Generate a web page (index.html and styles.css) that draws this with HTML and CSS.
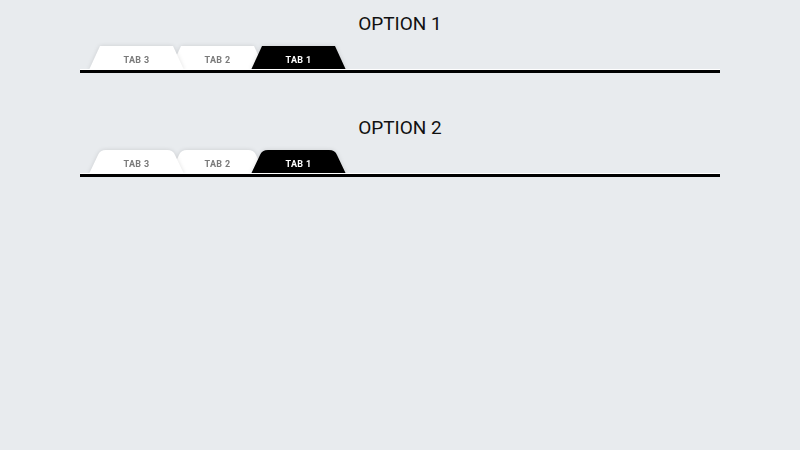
FILE: index.html
```html
<!DOCTYPE html>
<html lang="en">
<head>
    <meta charset="UTF-8">
    <meta name="viewport" content="width=device-width, initial-scale=1.0">
    <title>Tabs</title>
    <link rel="stylesheet" href="styles.css">
</head>
<body>
    <div class="container">
        <section class="option">
            <h2 class="option-title">OPTION 1</h2>
            <div class="tabs">
                <a class="tab tab-3">TAB 3</a>
                <a class="tab tab-2">TAB 2</a>
                <a class="tab tab-1 active">TAB 1</a>
            </div>
            <div class="tab-line"></div>
        </section>

        <section class="option rounded">
            <h2 class="option-title">OPTION 2</h2>
            <div class="tabs">
                <a class="tab tab-3">TAB 3</a>
                <a class="tab tab-2">TAB 2</a>
                <a class="tab tab-1 active">TAB 1</a>
            </div>
            <div class="tab-line"></div>
        </section>
    </div>
</body>
</html>
```

FILE: styles.css
```css
body {
    margin: 0;
    font-family: Roboto, 'Liberation Sans', sans-serif;
    background-color: #e8ebee;
}
.container {
    width: 640px;
    margin: 0 auto;
}
.option {
    padding-top: 12px;
    margin-bottom: 31px;
}
.option-title {
    margin: 0 0 10px;
    font-size: 19px;
    line-height: 24px;
    font-weight: 400;
    color: #111;
    text-align: center;
}
.tabs {
    display: flex;
    padding-left: 9px;
}
.tab {
    position: relative;
    box-sizing: border-box;
    width: 95px;
    height: 24px;
    padding-top: 3px;
    margin-left: -14px;
    display: flex;
    align-items: center;
    justify-content: center;
    font-size: 9px;
    font-weight: 700;
    letter-spacing: 0.3px;
    color: #7a7a7a;
    cursor: pointer;
    filter: drop-shadow(0 0 2px rgba(0,0,0,0.12));
}
.tab:first-child {
    margin-left: 0;
}
/* trapezoid background */
.tab::before {
    content: '';
    position: absolute;
    inset: 0;
    z-index: -1;
    background: #fff;
    clip-path: polygon(11px 0, 84px 0, 95px 24px, 0 24px);
}
.rounded .tab::before {
    clip-path: path('M0 24 L9 5 Q11 0 17 0 L78 0 Q84 0 86 5 L95 24 Z');
}
.tab-3 { z-index: 2; }
.tab-2 { z-index: 1; }
.tab-1 { z-index: 3; }
.tab.active {
    color: #fff;
}
.tab.active::before {
    background: #000;
}
.tab-line {
    height: 3px;
    background: #000;
    box-shadow: 0 -1px 0 #fff;
    position: relative;
    z-index: 4;
}
```
